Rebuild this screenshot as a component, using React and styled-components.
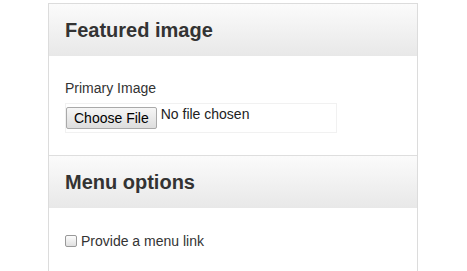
import React from "react";
import styled, { createGlobalStyle } from "styled-components";

const GlobalStyle = createGlobalStyle`
  html, body {
    margin: 0;
    padding: 0;
    background: #fff;
  }
  body {
    font-family: "Liberation Sans", Arial, Helvetica, sans-serif;
    font-size: 14px;
    color: #333;
  }
`;

const Page = styled.div`
  padding: 3px 0 0 48px;
`;

const Panel = styled.div`
  width: 368px;
  border: 1px solid #dcdcdc;
  border-bottom: none;
  background: #fff;
`;

const PanelHeading = styled.div`
  height: 52px;
  display: flex;
  align-items: center;
  padding: 0 16px;
  background: linear-gradient(to bottom, #fbfbfb 0%, #e8e8e8 100%);
  ${(p) => p.$divided && "border-top: 1px solid #dedede;"}
`;

const PanelTitle = styled.h3`
  margin: 0;
  font-size: 20px;
  font-weight: bold;
  color: #333;
`;

const PanelBody = styled.div`
  padding: ${(p) => p.$pad || "24px 16px 22px"};
`;

const Label = styled.div`
  font-size: 14px;
  line-height: 16px;
  color: #333;
  margin-bottom: 7px;
`;

const FileBox = styled.label`
  box-sizing: border-box;
  width: 272px;
  height: 30px;
  border: 1px solid #f1f1f1;
  display: flex;
  align-items: flex-start;
  gap: 4px;
  cursor: pointer;

  input {
    display: none;
  }
`;

const FileButton = styled.span`
  box-sizing: border-box;
  margin-top: 3px;
  height: 22px;
  padding: 0 7px;
  display: flex;
  align-items: center;
  font-family: "Liberation Sans", Arial, sans-serif;
  font-size: 14px;
  color: #000;
  border: 1px solid #a9a9a9;
  border-radius: 2px;
  background: linear-gradient(to bottom, #f6f6f6, #dddddd);
`;

const FileName = styled.span`
  margin-top: 2px;
  font-size: 14px;
  line-height: 16px;
  color: #222;
`;

const CheckRow = styled.label`
  display: flex;
  align-items: center;
  gap: 4px;
  font-size: 14px;
  line-height: 16px;
  color: #333;
`;

const Box = styled.span`
  box-sizing: border-box;
  width: 12px;
  height: 12px;
  border: 1px solid #999;
  border-radius: 2px;
  background: linear-gradient(to bottom, #fcfcfc, #e0e0e0);
`;

export default function App() {
  return (
    <>
      <GlobalStyle />
      <Page>
        <Panel>
          <PanelHeading>
            <PanelTitle>Featured image</PanelTitle>
          </PanelHeading>
          <PanelBody>
            <Label>Primary Image</Label>
            <FileBox>
              <input type="file" />
              <FileButton>Choose File</FileButton>
              <FileName>No file chosen</FileName>
            </FileBox>
          </PanelBody>
          <PanelHeading $divided>
            <PanelTitle>Menu options</PanelTitle>
          </PanelHeading>
          <PanelBody $pad="25px 16px 30px">
            <CheckRow>
              <Box />
              Provide a menu link
            </CheckRow>
          </PanelBody>
        </Panel>
      </Page>
    </>
  );
}
